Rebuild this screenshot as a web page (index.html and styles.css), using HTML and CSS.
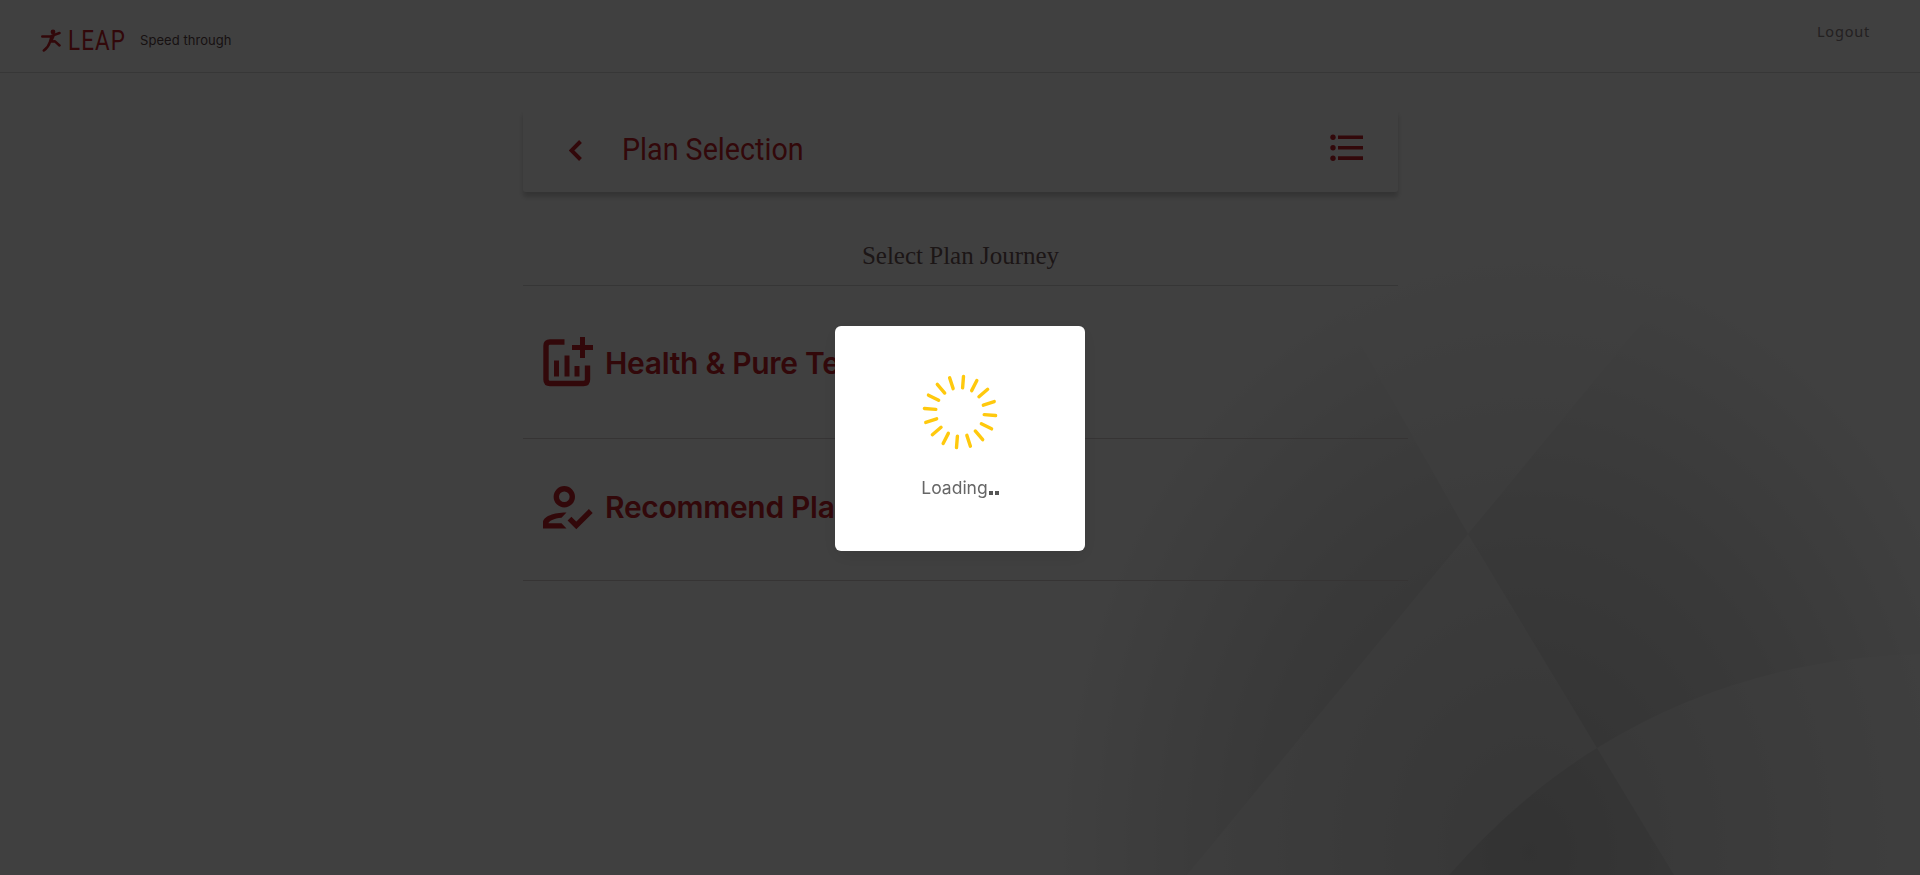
FILE: index.html
```html
<!DOCTYPE html>
<html lang="en">
<head>
<meta charset="utf-8">
<title>LEAP - Plan Selection</title>
<link rel="stylesheet" href="styles.css">
</head>
<body>
<div class="page">
  <svg class="backdrop" viewBox="0 0 920 620" aria-hidden="true">
    <defs>
      <radialGradient id="deep" gradientUnits="userSpaceOnUse" cx="0" cy="0" r="1" gradientTransform="translate(529 597) scale(465 590)">
        <stop offset="0" stop-color="#c8c8c8"/><stop offset=".6" stop-color="#e4e4e4"/><stop offset="1" stop-color="#fdfdfd"/>
      </radialGradient>
      <radialGradient id="soft" gradientUnits="userSpaceOnUse" cx="0" cy="0" r="1" gradientTransform="translate(529 597) scale(465 590)">
        <stop offset="0" stop-color="#dadada"/><stop offset="1" stop-color="#fdfdfd"/>
      </radialGradient>
    </defs>
    <rect width="920" height="620" fill="url(#soft)"/>
    <path fill="url(#deep)" d="M0 0H310L468 279L187 620H0Z"/>
    <path fill="url(#deep)" d="M468 279L698 0H920V399Q740 404 597 493Z"/>
    <path fill="url(#deep)" d="M449 620Q519 541 597 493L674 620Z"/>
  </svg>

  <header class="topbar">
    <div class="brand">
      <svg class="runner" viewBox="0 0 20 23" aria-hidden="true">
        <circle cx="12" cy="3" r="2.400"/>
        <path d="M1.300 7.400L10 7.200L18.500 4M10.500 7.500L9 12.800Q7.500 18 2.800 21.500M9 12.500L14 12.300L18.500 16.500M12.500 7L10 12.500"/>
      </svg>
      <span class="wordmark">LEAP</span>
      <span class="tagline">Speed through</span>
    </div>
    <a class="logout">Logout</a>
  </header>

  <main class="content">
    <section class="titlebar">
      <svg class="back" viewBox="0 0 13 21" aria-hidden="true"><path d="M11.500 1.500L2.500 10.500L11.500 19.500"/></svg>
      <h1 class="title">Plan Selection</h1>
      <svg class="menu" viewBox="0 0 34 28" aria-hidden="true">
        <circle cx="3" cy="3.200" r="2.700"/><circle cx="3" cy="13.700" r="2.700"/><circle cx="3" cy="24.200" r="2.700"/>
        <path d="M8 1.500h25v3.600H8zM8 11.900h25v3.600H8zM8 22.300h25v3.600H8z"/>
      </svg>
    </section>
    <h2 class="subtitle">Select Plan Journey</h2>
    <div class="option first">
      <svg class="icon" viewBox="0 0 50 50" aria-hidden="true">
        <path class="stroke" d="M21.500 5H7Q3 5 3 9V42.500Q3 46.500 7 46.500H40.500Q44.500 46.500 44.500 42.500V28.500"/>
        <path d="M11 23.500h5v16h-5zM21.500 18.500h5v21h-5zM31.500 29h5v10.500h-5zM37 0h5v8h8v5h-8v8h-5v-8h-8v-5h8z"/>
      </svg>
      <span class="label">Health &amp; Pure Term</span>
    </div>
    <div class="option second">
      <svg class="icon" viewBox="0 0 50 50" aria-hidden="true">
        <circle class="stroke" cx="21.300" cy="13.700" r="8"/>
        <path fill-rule="evenodd" d="M0 45.500V39.500C0 33 12 29.300 23.500 29.500L18.500 34.800C11 35.500 5.500 38.300 5.500 40.300H18.500L23.500 45.500Z"/>
        <path class="stroke" d="M26.500 35.700L33.300 42.500L47.800 28"/>
      </svg>
      <span class="label">Recommend Plan</span>
    </div>
  </main>
</div>

<div class="overlay">
  <div class="modal">
    <svg class="spinner" viewBox="-38 -38 76 76" aria-hidden="true">
      <path id="ray" d="M2.600 -24.200L3.500 -35.600"/>
      <use href="#ray" transform="rotate(22.500)"/><use href="#ray" transform="rotate(45)"/><use href="#ray" transform="rotate(67.500)"/>
      <use href="#ray" transform="rotate(90)"/><use href="#ray" transform="rotate(112.500)"/><use href="#ray" transform="rotate(135)"/>
      <use href="#ray" transform="rotate(157.500)"/><use href="#ray" transform="rotate(180)"/><use href="#ray" transform="rotate(202.500)"/>
      <use href="#ray" transform="rotate(225)"/><use href="#ray" transform="rotate(247.500)"/><use href="#ray" transform="rotate(270)"/>
      <use href="#ray" transform="rotate(292.500)"/><use href="#ray" transform="rotate(315)"/><use href="#ray" transform="rotate(337.500)"/>
    </svg>
    <p class="loading">Loading<span class="dots"><i></i><i></i></span></p>
  </div>
</div>
</body>
</html>
```
FILE: styles.css
```css
* { box-sizing: border-box; margin: 0; }
html, body { height: 100%; overflow: hidden; }
body { font-family: "Liberation Sans", sans-serif; background: #fff; }
.page { position: relative; height: 875px; }
.backdrop { position: absolute; right: 0; bottom: 0; width: 920px; height: 620px; }
.topbar { position: relative; height: 73px; border-bottom: 1px solid #dcdcdc; display: flex; justify-content: space-between; padding: 0 50px 0 41px; }
.brand { display: flex; align-items: center; padding-top: 8px; }
.runner { width: 20px; height: 23px; margin-top: 1px; fill: #c7222a; }
.runner path { fill: none; stroke: #c7222a; stroke-width: 2.500; stroke-linecap: round; stroke-linejoin: round; }
.wordmark { width: 57px; margin: 1px 0 0 7px; color: #c7222a; font: 28px/30px Roboto, sans-serif; letter-spacing: 1.4px; white-space: nowrap; transform: scaleX(.8); transform-origin: 0 50%; }
.tagline { margin-left: 15px; font: 13px/20px Inter, sans-serif; letter-spacing: .05px; color: #5c4648; }
.logout { padding-top: 19px; font: 14.500px/24px "Noto Sans", sans-serif; letter-spacing: .8px; color: #8c8284; }
.content { position: relative; width: 875px; margin-left: 523px; padding-top: 36px; }
.titlebar { height: 83px; display: flex; align-items: center; padding: 0 34px 0 46px; border-radius: 3px; box-shadow: 0 5px 5px rgba(0,0,0,.2); }
.back { width: 13px; height: 21px; }
.back path { fill: none; stroke: #c7222a; stroke-width: 4; }
.title { margin: -1px 0 0 40px; flex: 1; font: 31px/40px Roboto, sans-serif; color: #c7222a; transform: scaleX(.925); transform-origin: 0 50%; }
.menu { width: 34px; height: 28px; margin-top: -6px; fill: #c7222a; }
.subtitle { height: 94px; padding-top: 48px; border-bottom: 1px solid #d5d5d5; text-align: center; font: 25px/31px "Liberation Serif", serif; color: #71585a; }
.option { width: 885px; display: flex; align-items: flex-start; padding-left: 20px; border-bottom: 1px solid #d5cfd0; }
.first { height: 153px; padding-top: 51px; }
.second { height: 142px; padding-top: 46px; }
.second .icon { margin-top: -2px; }
.icon { width: 50px; height: 50px; fill: #c7222a; }
.stroke { fill: none; stroke: #c7222a; stroke-width: 5.400; }
.label { margin: 8px 0 0 12px; font: 600 30px/36px Inter, sans-serif; color: #c7222a; letter-spacing: -.3px; white-space: nowrap; }
.second .label { margin-top: 4px; }
.overlay { position: fixed; inset: 0; display: flex; align-items: center; justify-content: center; padding-top: 1px; background: rgba(0,0,0,.75); }
.modal { width: 250px; height: 225px; border-radius: 6px; background: #fff; display: flex; flex-direction: column; align-items: center; padding-top: 48px; box-shadow: 0 5px 20px rgba(0,0,0,.1); }
.spinner { width: 76px; height: 76px; }
.spinner path { stroke: #ffc90d; stroke-width: 3.400; stroke-linecap: round; }
.loading { display: flex; margin-top: 25px; font: 17.500px/26px Inter, sans-serif; color: #666; }
.dots { display: flex; align-items: flex-end; gap: 2px; padding: 0 0 6px 1px; }
.dots i { width: 4px; height: 4px; background: #555; }
```
